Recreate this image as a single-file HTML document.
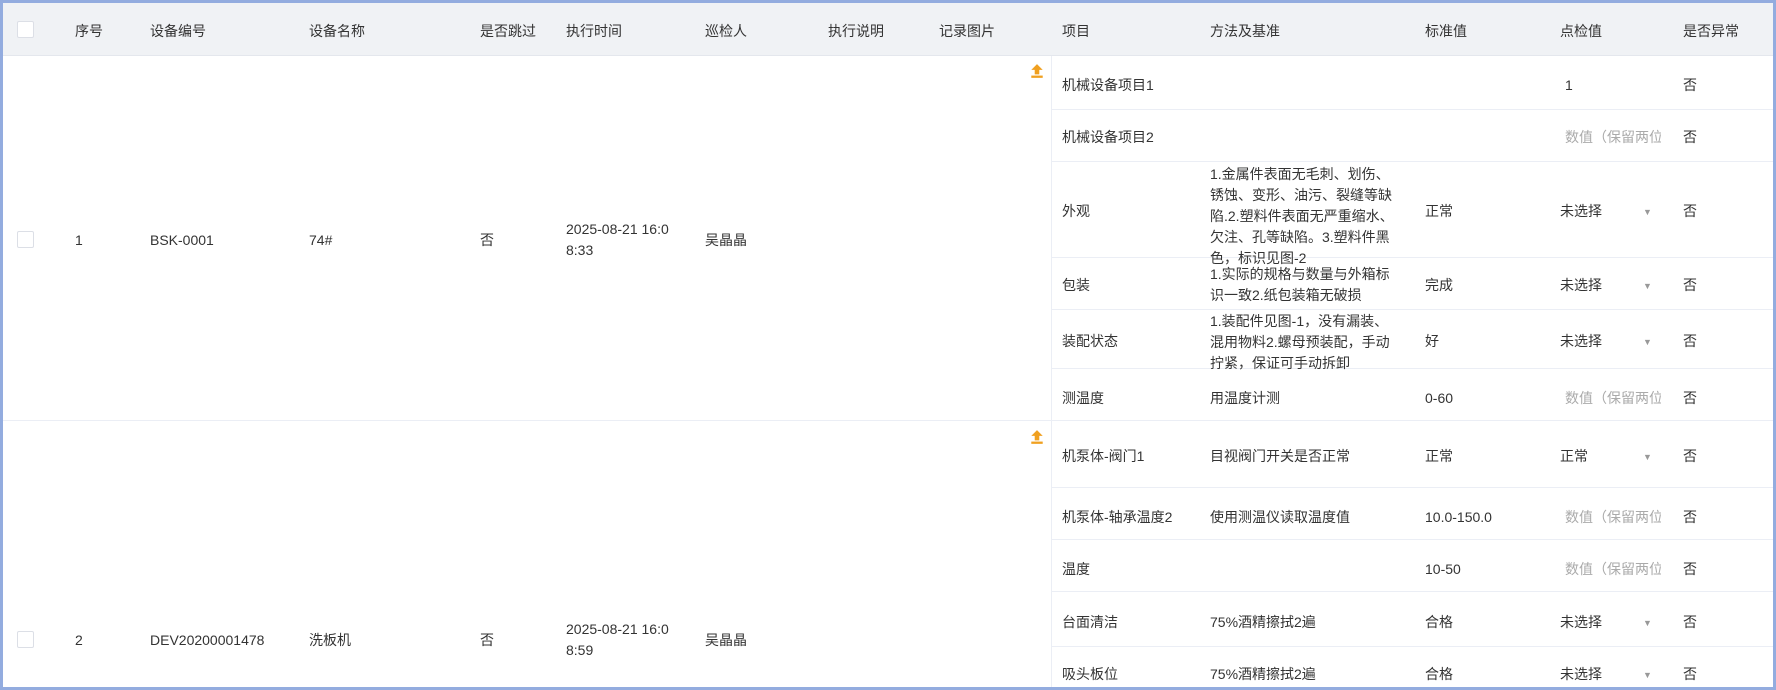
<!DOCTYPE html><html><head><meta charset="utf-8"><style>
body{margin:0;width:1776px;height:690px;overflow:hidden;background:#fff;font-family:"Liberation Sans","Noto Sans CJK SC",sans-serif;font-size:14px;color:#333}
#w{position:absolute;left:0;top:0;width:1770px;height:684px;border:3px solid #93acdf;overflow:hidden}
.a{position:absolute;white-space:nowrap;line-height:20px}
.hd{position:absolute;left:0;top:0;width:1770px;height:52px;background:#f0f2f5;border-bottom:1px solid #e4e7ed}
.cb{position:absolute;width:15px;height:15px;border:1px solid #dcdfe6;border-radius:2px;background:#fff}
.hl{position:absolute;left:1048px;width:722px;height:1px;background:#ebeef5}
.ph{color:#aaa;width:96px;overflow:hidden}
.ar{position:absolute;font-size:9px;color:#999;line-height:12px}
.up{position:absolute;width:16px;height:16px}
.ml{position:absolute;line-height:21px;white-space:nowrap}
</style></head><body><div id="w">
<div class="hd"></div>
<div class="cb" style="left:14px;top:18px"></div>
<div class="a" style="left:72px;top:18px">序号</div>
<div class="a" style="left:147px;top:18px">设备编号</div>
<div class="a" style="left:306px;top:18px">设备名称</div>
<div class="a" style="left:477px;top:18px">是否跳过</div>
<div class="a" style="left:563px;top:18px">执行时间</div>
<div class="a" style="left:702px;top:18px">巡检人</div>
<div class="a" style="left:825px;top:18px">执行说明</div>
<div class="a" style="left:936px;top:18px">记录图片</div>
<div class="a" style="left:1059px;top:18px">项目</div>
<div class="a" style="left:1207px;top:18px">方法及基准</div>
<div class="a" style="left:1422px;top:18px">标准值</div>
<div class="a" style="left:1557px;top:18px">点检值</div>
<div class="a" style="left:1680px;top:18px">是否异常</div>
<div style="position:absolute;left:1048px;top:53px;width:1px;height:640px;background:#ebeef5"></div>
<div style="position:absolute;left:0;top:417px;width:1770px;height:1px;background:#ebeef5"></div>
<div class="hl" style="top:106px"></div><div class="hl" style="top:158px"></div><div class="hl" style="top:254px"></div><div class="hl" style="top:306px"></div><div class="hl" style="top:365px"></div>
<div class="hl" style="top:484px"></div><div class="hl" style="top:536px"></div><div class="hl" style="top:588px"></div><div class="hl" style="top:643px"></div>
<!-- row1 -->
<div class="cb" style="left:14px;top:228px"></div>
<div class="a" style="left:72px;top:227px">1</div>
<div class="a" style="left:147px;top:227px">BSK-0001</div>
<div class="a" style="left:306px;top:227px">74#</div>
<div class="a" style="left:477px;top:227px">否</div>
<div class="ml" style="left:563px;top:216px">2025-08-21 16:0<br>8:33</div>
<div class="a" style="left:702px;top:227px">吴晶晶</div>
<svg class="up" style="left:1026px;top:60px" viewBox="0 0 14 14"><path d="M7 1L12 6H9V10H5V6H2Z" fill="#f0a020"/><rect x="2" y="11" width="10" height="2" fill="#f0a020"/></svg>
<div class="a" style="left:1059px;top:72px">机械设备项目1</div>
<div class="a" style="left:1562px;top:72px">1</div><div class="a" style="left:1680px;top:72px">否</div>
<div class="a" style="left:1059px;top:124px">机械设备项目2</div>
<div class="a ph" style="left:1562px;top:124px">数值（保留两位</div><div class="a" style="left:1680px;top:124px">否</div>
<div class="a" style="left:1059px;top:198px">外观</div>
<div class="ml" style="left:1207px;top:161px">1.金属件表面无毛刺、划伤、<br>锈蚀、变形、油污、裂缝等缺<br>陷.2.塑料件表面无严重缩水、<br>欠注、孔等缺陷。3.塑料件黑<br>色，标识见图-2</div>
<div class="a" style="left:1422px;top:198px">正常</div><div class="a" style="left:1557px;top:198px">未选择</div><div class="ar" style="left:1640px;top:203px">▼</div><div class="a" style="left:1680px;top:198px">否</div>
<div class="a" style="left:1059px;top:272px">包装</div>
<div class="ml" style="left:1207px;top:261px">1.实际的规格与数量与外箱标<br>识一致2.纸包装箱无破损</div>
<div class="a" style="left:1422px;top:272px">完成</div><div class="a" style="left:1557px;top:272px">未选择</div><div class="ar" style="left:1640px;top:277px">▼</div><div class="a" style="left:1680px;top:272px">否</div>
<div class="a" style="left:1059px;top:328px">装配状态</div>
<div class="ml" style="left:1207px;top:308px">1.装配件见图-1，没有漏装、<br>混用物料2.螺母预装配，手动<br>拧紧，保证可手动拆卸</div>
<div class="a" style="left:1422px;top:328px">好</div><div class="a" style="left:1557px;top:328px">未选择</div><div class="ar" style="left:1640px;top:333px">▼</div><div class="a" style="left:1680px;top:328px">否</div>
<div class="a" style="left:1059px;top:385px">测温度</div><div class="a" style="left:1207px;top:385px">用温度计测</div><div class="a" style="left:1422px;top:385px">0-60</div>
<div class="a ph" style="left:1562px;top:385px">数值（保留两位</div><div class="a" style="left:1680px;top:385px">否</div>
<!-- row2 -->
<div class="cb" style="left:14px;top:628px"></div>
<div class="a" style="left:72px;top:627px">2</div>
<div class="a" style="left:147px;top:627px">DEV20200001478</div>
<div class="a" style="left:306px;top:627px">洗板机</div>
<div class="a" style="left:477px;top:627px">否</div>
<div class="ml" style="left:563px;top:616px">2025-08-21 16:0<br>8:59</div>
<div class="a" style="left:702px;top:627px">吴晶晶</div>
<svg class="up" style="left:1026px;top:426px" viewBox="0 0 14 14"><path d="M7 1L12 6H9V10H5V6H2Z" fill="#f0a020"/><rect x="2" y="11" width="10" height="2" fill="#f0a020"/></svg>
<div class="a" style="left:1059px;top:443px">机泵体-阀门1</div><div class="a" style="left:1207px;top:443px">目视阀门开关是否正常</div><div class="a" style="left:1422px;top:443px">正常</div><div class="a" style="left:1557px;top:443px">正常</div><div class="ar" style="left:1640px;top:448px">▼</div><div class="a" style="left:1680px;top:443px">否</div>
<div class="a" style="left:1059px;top:504px">机泵体-轴承温度2</div><div class="a" style="left:1207px;top:504px">使用测温仪读取温度值</div><div class="a" style="left:1422px;top:504px">10.0-150.0</div><div class="a ph" style="left:1562px;top:504px">数值（保留两位</div><div class="a" style="left:1680px;top:504px">否</div>
<div class="a" style="left:1059px;top:556px">温度</div><div class="a" style="left:1422px;top:556px">10-50</div><div class="a ph" style="left:1562px;top:556px">数值（保留两位</div><div class="a" style="left:1680px;top:556px">否</div>
<div class="a" style="left:1059px;top:609px">台面清洁</div><div class="a" style="left:1207px;top:609px">75%酒精擦拭2遍</div><div class="a" style="left:1422px;top:609px">合格</div><div class="a" style="left:1557px;top:609px">未选择</div><div class="ar" style="left:1640px;top:614px">▼</div><div class="a" style="left:1680px;top:609px">否</div>
<div class="a" style="left:1059px;top:661px">吸头板位</div><div class="a" style="left:1207px;top:661px">75%酒精擦拭2遍</div><div class="a" style="left:1422px;top:661px">合格</div><div class="a" style="left:1557px;top:661px">未选择</div><div class="ar" style="left:1640px;top:666px">▼</div><div class="a" style="left:1680px;top:661px">否</div>
</div></body></html>
